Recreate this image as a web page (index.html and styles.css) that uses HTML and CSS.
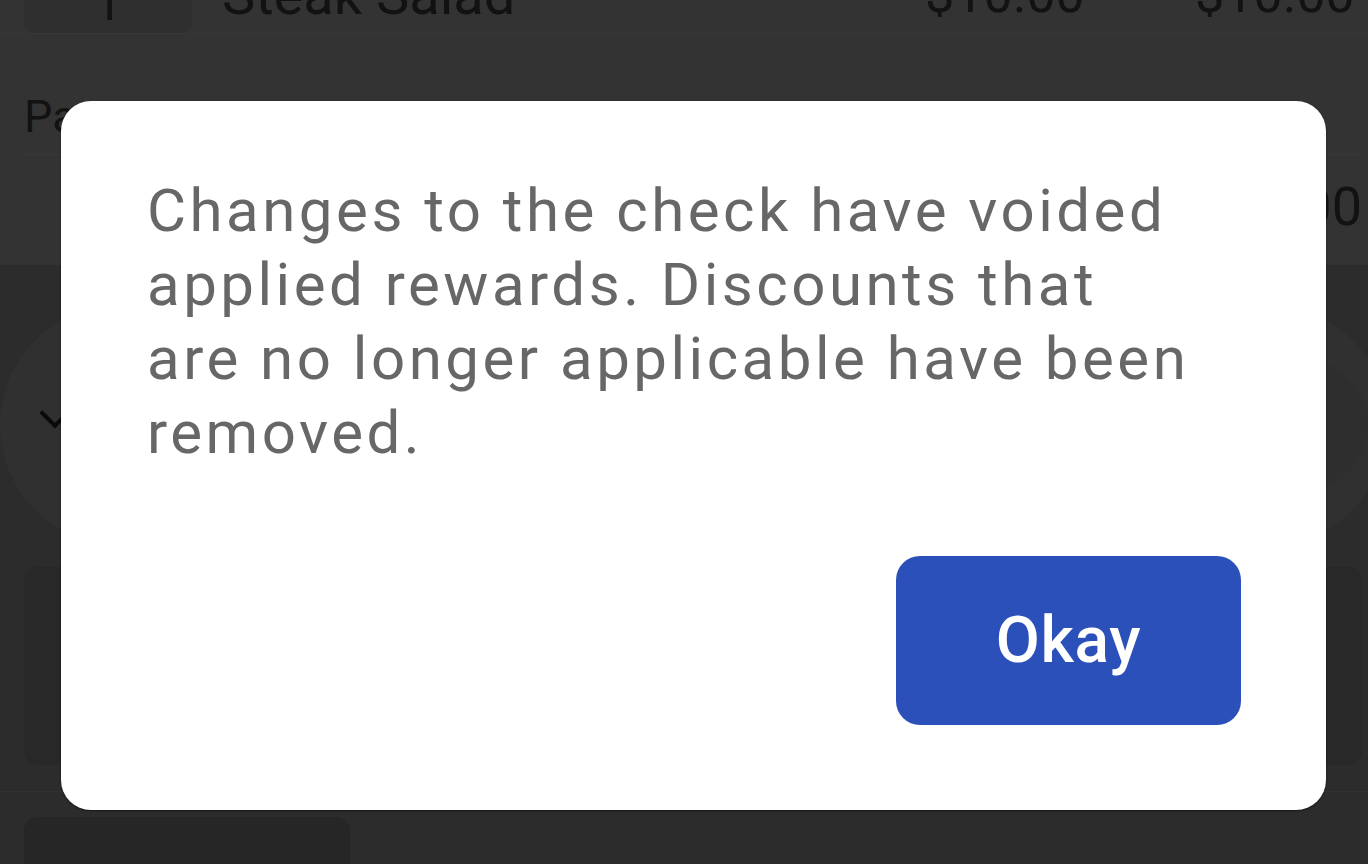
FILE: index.html
```html
<!DOCTYPE html>
<html lang="en">
<head>
    <meta charset="UTF-8">
    <meta name="viewport" content="width=device-width, initial-scale=1.0">
    <title>Check</title>
    <link rel="stylesheet" href="styles.css">
</head>
<body>

    <div class="app">
        <div class="items">
            <div class="item-row">
                <div class="qty">1</div>
                <div class="item-name">Steak Salad</div>
                <div class="price">$10.00</div>
                <div class="price total">$10.00</div>
            </div>
            <div class="payments">
                <div class="pay-label">Payments</div>
                <div class="pay-amount">$10.00</div>
            </div>
        </div>

        <div class="actions">
            <div class="pill">
                <span class="chevron"></span>
                <span class="round-btn"></span>
            </div>
            <div class="cards">
                <div class="card"></div>
                <div class="card"></div>
            </div>
            <div class="bottom-bar">
                <div class="tab"></div>
            </div>
        </div>
    </div>

    <div class="overlay">
        <div class="dialog">
            <p class="message">Changes to the check have voided<br>applied rewards. Discounts that<br>are no longer applicable have been<br>removed.</p>
            <div class="dialog-actions">
                <button class="okay">Okay</button>
            </div>
        </div>
    </div>

</body>
</html>
```

FILE: styles.css
```css
body { margin: 0; background: #2c2c2c; font-family: Roboto, "Liberation Sans", sans-serif; overflow: hidden; }
.app { height: 864px; }

.items { display: flow-root; background: #333333; height: 265px; }
.item-row { display: flex; align-items: flex-end; height: 78px; margin-top: -45px; padding: 0 0 0 24px; border-bottom: 1px solid #363636; color: #121212; font-size: 52px; }
.qty { box-sizing: border-box; width: 168px; height: 78px; padding-top: 28px; background: #2f2f2f; border-radius: 12px; text-align: center; line-height: 40px; }
.item-name { margin-left: 30px; flex: 1; font-size: 56px; line-height: 40px; padding-bottom: 18px; }
.price { width: 270px; line-height: 40px; padding-bottom: 18px; }
.price.total { width: 173px; }
.payments { padding: 0 6px 0 24px; color: #121212; }
.pay-label { box-sizing: border-box; font-size: 45px; padding-top: 56px; border-bottom: 1px solid #383838; height: 121px; }
.pay-amount { font-size: 54px; text-align: right; margin-top: 20px; }

.actions { padding: 40px 0 0; }
.pill { position: relative; height: 240px; background: #303030; border-radius: 120px; margin: 0 -20px 0 0; }
.chevron { position: absolute; left: 44px; top: 97px; width: 18px; height: 18px; border-right: 4px solid #0a0a0a; border-bottom: 4px solid #0a0a0a; transform: rotate(45deg); }
.round-btn { position: absolute; right: 20px; top: 55px; width: 130px; height: 130px; border-radius: 50%; background: #2e2e2e; }
.cards { display: flex; gap: 20px; padding: 22px 6px 0 24px; }
.card { flex: 1; height: 198px; background: #282828; border-radius: 14px; }
.bottom-bar { border-top: 1px solid #333333; margin-top: 26px; padding: 25px 24px 0; }
.tab { width: 326px; height: 60px; background: #262626; border-radius: 14px; }

.overlay { position: fixed; inset: 0; display: flex; align-items: flex-start; padding: 101px 42px 0 61px; }
.dialog { flex: 1; background: #ffffff; border-radius: 30px; padding: 73px 85px 85px 86px; box-shadow: 0 1px 2px rgba(0, 0, 0, 0.5); }
.message { margin: 0; font-size: 60px; line-height: 74px; color: #676767; letter-spacing: 3.5px; white-space: nowrap; }
.dialog-actions { display: flex; justify-content: flex-end; margin-top: 86px; }
.okay { width: 345px; height: 169px; border: none; border-radius: 24px; background: #2b50b9; color: #ffffff; font-family: Roboto, "Liberation Sans", sans-serif; font-size: 64px; font-weight: 500; letter-spacing: 0.01em; }
```
